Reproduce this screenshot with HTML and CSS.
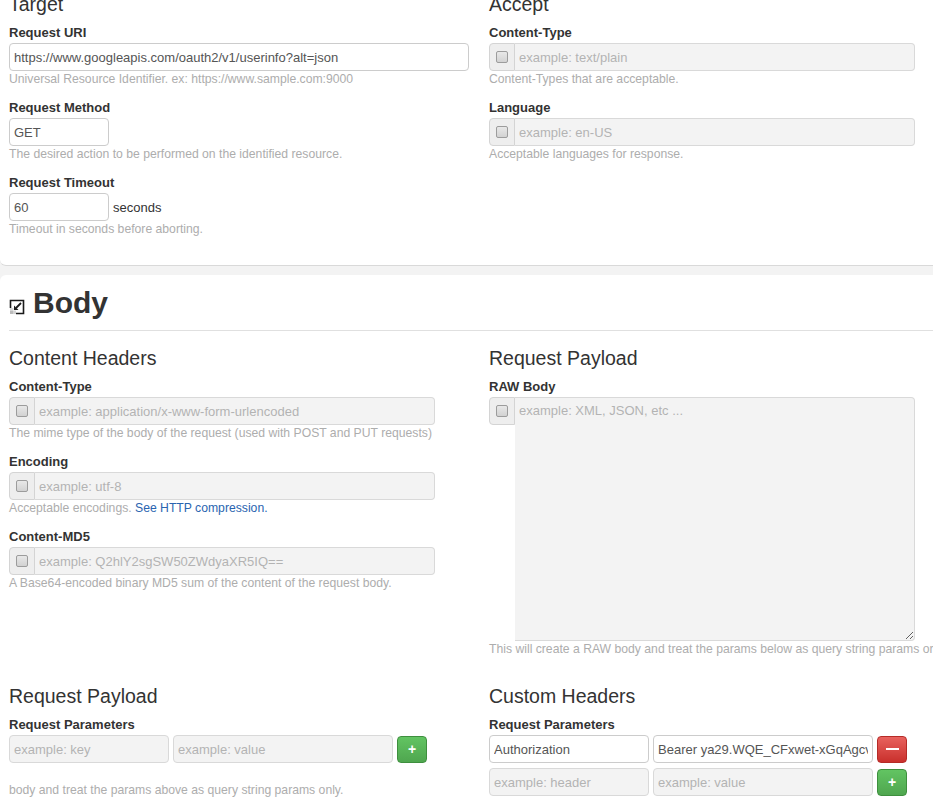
FILE: index.html
```html
<!DOCTYPE html>
<html>
<head>
<meta charset="utf-8">
<title>Request</title>
<link rel="stylesheet" href="styles.css">
</head>
<body>
<div class="page">
  <section class="panel panel-top">
    <div class="cols">
      <div class="col">
        <h3>Target</h3>
        <div class="field">
          <label>Request URI</label>
          <input class="ctl ctl-uri" type="text" value="https://www.googleapis.com/oauth2/v1/userinfo?alt=json">
          <p class="help">Universal Resource Identifier. ex: https://www.sample.com:9000</p>
        </div>
        <div class="field">
          <label>Request Method</label>
          <input class="ctl ctl-short" type="text" value="GET">
          <p class="help">The desired action to be performed on the identified resource.</p>
        </div>
        <div class="field">
          <label>Request Timeout</label>
          <div class="inline">
            <input class="ctl ctl-short" type="text" value="60">
            <span class="unit">seconds</span>
          </div>
          <p class="help">Timeout in seconds before aborting.</p>
        </div>
      </div>
      <div class="col">
        <h3>Accept</h3>
        <div class="field">
          <label>Content-Type</label>
          <div class="group">
            <span class="addon"><span class="cb"></span></span>
            <input class="ctl ctl-off grow" type="text" placeholder="example: text/plain">
          </div>
          <p class="help">Content-Types that are acceptable.</p>
        </div>
        <div class="field">
          <label>Language</label>
          <div class="group">
            <span class="addon"><span class="cb"></span></span>
            <input class="ctl ctl-off grow" type="text" placeholder="example: en-US">
          </div>
          <p class="help">Acceptable languages for response.</p>
        </div>
      </div>
    </div>
  </section>

  <section class="panel panel-body">
    <h2 class="section-title">
      <svg class="toggle" width="16" height="16" viewBox="0 0 16 16">
        <rect x="1" y="9" width="3" height="3" fill="#d6d6d6"/>
        <rect x="4" y="12" width="3" height="3" fill="#d6d6d6"/>
        <rect x="1" y="12" width="3" height="3" fill="#bcbcbc"/>
        <rect x="4" y="9" width="3" height="3" fill="#eaeaea"/>
        <path d="M1.5 9 V1.5 H14.5 V14.5 H7" fill="none" stroke="#1a1a1a" stroke-width="1.6"/>
        <path d="M12 4 L7 9" stroke="#1a1a1a" stroke-width="1.8"/>
        <path d="M5 6.5 L5 11 L9.5 11 Z" fill="#1a1a1a"/>
      </svg>
      <span>Body</span>
    </h2>
    <hr class="rule">
    <div class="cols">
      <div class="col">
        <h3>Content Headers</h3>
        <div class="field">
          <label>Content-Type</label>
          <div class="group">
            <span class="addon"><span class="cb"></span></span>
            <input class="ctl ctl-off grow" type="text" placeholder="example: application/x-www-form-urlencoded">
          </div>
          <p class="help">The mime type of the body of the request (used with POST and PUT requests)</p>
        </div>
        <div class="field">
          <label>Encoding</label>
          <div class="group">
            <span class="addon"><span class="cb"></span></span>
            <input class="ctl ctl-off grow" type="text" placeholder="example: utf-8">
          </div>
          <p class="help">Acceptable encodings. <a class="link" href="#">See HTTP compression.</a></p>
        </div>
        <div class="field">
          <label>Content-MD5</label>
          <div class="group">
            <span class="addon"><span class="cb"></span></span>
            <input class="ctl ctl-off grow" type="text" placeholder="example: Q2hlY2sgSW50ZWdyaXR5IQ==">
          </div>
          <p class="help">A Base64-encoded binary MD5 sum of the content of the request body.</p>
        </div>
      </div>
      <div class="col">
        <h3>Request Payload</h3>
        <div class="field">
          <label>RAW Body</label>
          <div class="group group-area">
            <span class="addon"><span class="cb"></span></span>
            <textarea class="ctl ctl-off area grow" placeholder="example: XML, JSON, etc ..."></textarea>
          </div>
          <p class="help">This will create a RAW body and treat the params below as query string params or form fields.</p>
        </div>
      </div>
    </div>

    <div class="cols row2">
      <div class="col">
        <h3>Request Payload</h3>
        <div class="field">
          <label>Request Parameters</label>
          <div class="kv-row">
            <input class="ctl ctl-off key" type="text" placeholder="example: key">
            <input class="ctl ctl-off val" type="text" placeholder="example: value">
            <button class="btn btn-add">+</button>
          </div>
          <p class="help help-low">body and treat the params above as query string params only.</p>
        </div>
      </div>
      <div class="col">
        <h3>Custom Headers</h3>
        <div class="field">
          <label>Request Parameters</label>
          <div class="kv-row">
            <input class="ctl key" type="text" value="Authorization">
            <input class="ctl val" type="text" value="Bearer ya29.WQE_CFxwet-xGqAgcvR0kLzPq8uJ">
            <button class="btn btn-del"><span class="dash"></span></button>
          </div>
          <div class="kv-row">
            <input class="ctl ctl-off key" type="text" placeholder="example: header">
            <input class="ctl ctl-off val" type="text" placeholder="example: value">
            <button class="btn btn-add">+</button>
          </div>
        </div>
      </div>
    </div>
  </section>
</div>
</body>
</html>
```
FILE: styles.css
```css
html, body {
  margin: 0;
  padding: 0;
  background: #f3f3f3;
  overflow: hidden;
}

body {
  font-family: "Liberation Sans", Arial, sans-serif;
  font-size: 13px;
  color: #333;
}

.page {
  margin-top: -6px;
}

.panel {
  background: #fff;
}

.panel-top {
  padding: 0 0 28px 9px;
  border-bottom: 1px solid #d9d9d9;
  border-radius: 0 0 0 6px;
}

.panel-body {
  margin-top: 9px;
  padding: 11px 0 60px 9px;
  border-radius: 6px 0 0 0;
}

.cols {
  display: grid;
  grid-template-columns: 460px 460px;
  column-gap: 20px;
  align-items: start;
}

.col {
  min-width: 0;
}

h3 {
  margin: 0 0 8px;
  font-size: 19.5px;
  line-height: 21px;
  font-weight: normal;
  color: #333;
}

.field + .field {
  margin-top: 11px;
}

label {
  display: block;
  font-weight: bold;
  font-size: 13px;
  line-height: 18px;
  padding-top: 1px;
  margin-bottom: 1px;
  color: #333;
}

.help {
  margin: 0;
  font-size: 12.2px;
  line-height: 16px;
  color: #adadad;
  white-space: nowrap;
}

.link {
  color: #2a64b0;
  text-decoration: none;
}

.ctl {
  box-sizing: border-box;
  height: 28px;
  margin: 0;
  padding: 0 4px;
  border: 1px solid #ccc;
  border-radius: 4px;
  background: #fff;
  font-family: "Liberation Sans", Arial, sans-serif;
  font-size: 13px;
  color: #555;
  outline: none;
}

.ctl::placeholder {
  color: #b3b3b3;
}

.ctl-off {
  background: #f3f3f3;
  border-color: #d9d9d9;
}

.ctl-uri {
  display: block;
  width: 460px;
}

.ctl-short {
  width: 100px;
}

.inline {
  display: flex;
  align-items: center;
}

.unit {
  margin-left: 4px;
  font-size: 13px;
  color: #333;
}

.group {
  display: flex;
  width: 426px;
  height: 28px;
}

.group-area {
  height: auto;
  align-items: flex-start;
}

.addon {
  box-sizing: border-box;
  width: 26px;
  height: 28px;
  flex: none;
  display: flex;
  align-items: center;
  justify-content: center;
  background: #eeeeee;
  border: 1px solid #d4d4d4;
  border-radius: 4px 0 0 4px;
}

.cb {
  box-sizing: border-box;
  width: 12px;
  height: 12px;
  border: 1px solid #9c9c9c;
  border-radius: 2px;
  background: linear-gradient(#e8e8e8, #d2d2d2);
}

.grow {
  flex: 1;
  min-width: 0;
  border-left: none;
  border-radius: 0 4px 4px 0;
}

.area {
  display: block;
  height: 244px;
  padding: 4px 4px;
  resize: vertical;
  line-height: 18px;
}

.section-title {
  display: flex;
  align-items: center;
  gap: 8px;
  margin: 0 0 11px;
  font-size: 30px;
  line-height: 33px;
  font-weight: bold;
  color: #333;
}

.toggle {
  flex: none;
  margin-top: 8px;
}

.rule {
  margin: 0 0 17px;
  border: 0;
  border-top: 1px solid #e0e0e0;
  height: 0;
}

.row2 {
  margin-top: 29px;
}

.kv-row {
  display: flex;
  align-items: center;
  gap: 4px;
}

.kv-row + .kv-row {
  margin-top: 5px;
}

.key {
  width: 160px;
}

.val {
  width: 220px;
}

.btn {
  box-sizing: border-box;
  width: 30px;
  height: 27px;
  padding: 0;
  border-radius: 4px;
  color: #fff;
  font-family: "Liberation Sans", Arial, sans-serif;
  font-size: 14px;
  font-weight: bold;
  line-height: 25px;
  display: flex;
  align-items: center;
  justify-content: center;
}

.btn-add {
  background: linear-gradient(#62c462, #4fa64f);
  border: 1px solid #3e8f3e;
}

.btn-del {
  background: linear-gradient(#e8625e, #c9302c);
  border: 1px solid #b52b27;
}

.dash {
  display: block;
  width: 13px;
  height: 2px;
  background: #fff;
}

.help-low {
  margin-top: 19px;
}
```
